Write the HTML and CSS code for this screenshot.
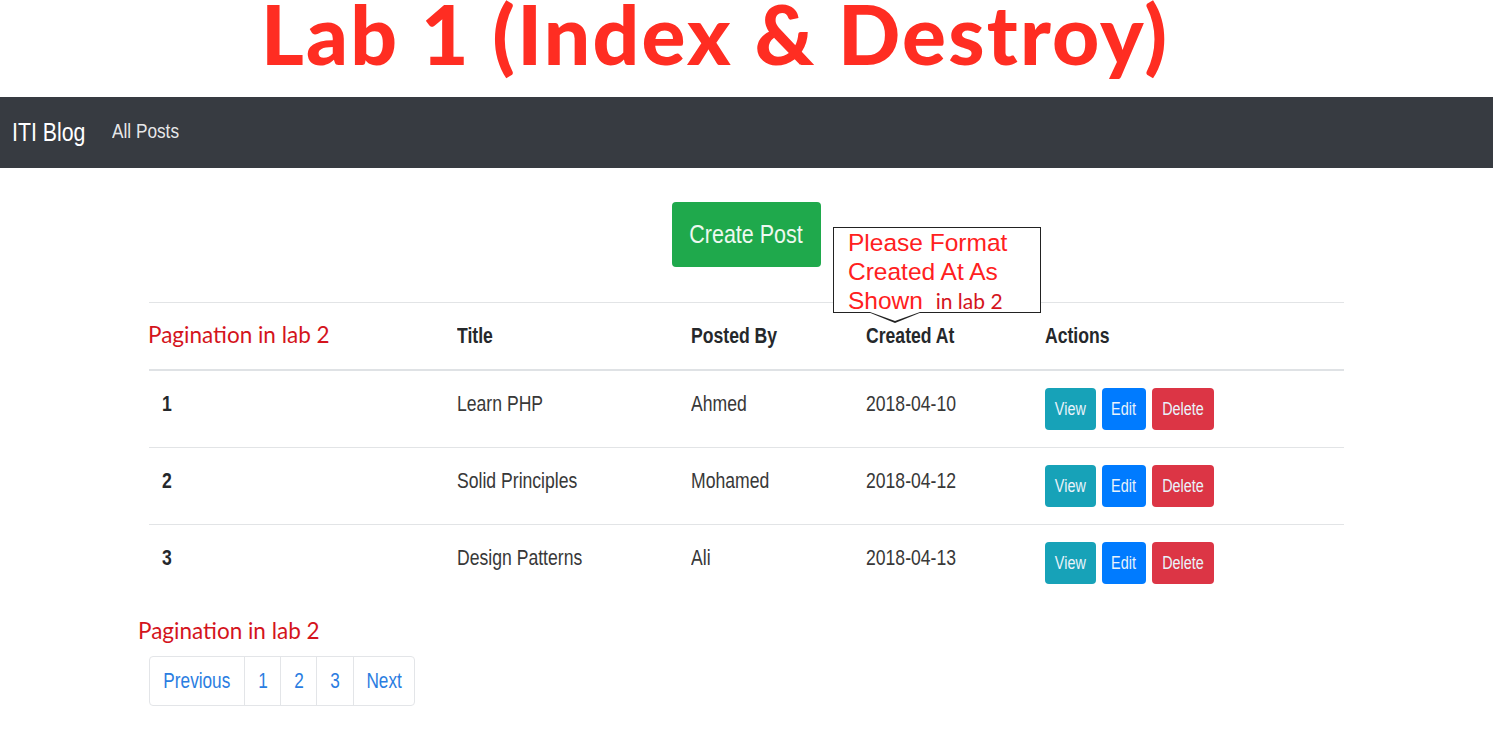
FILE: index.html
```html
<!DOCTYPE html>
<html lang="en">
<head>
<meta charset="utf-8">
<title>Lab 1 (Index &amp; Destroy)</title>
<link rel="stylesheet" href="styles.css">
</head>
<body>
<h1 class="lab-title">Lab 1 (Index &amp; Destroy)</h1>
<nav class="navbar">
  <a class="brand" href="#"><span class="sq">ITI Blog</span></a>
  <a class="nav-link" href="#"><span class="sq">All Posts</span></a>
</nav>
<main class="container">
  <div class="create-row">
    <a class="btn btn-success btn-create" href="#"><span class="sq sq-c">Create Post</span></a>
    <div class="callout">Please Format<br>Created At As<br>Shown <span class="callout-note">in lab 2</span></div>
  </div>
  <table class="posts">
    <colgroup>
      <col class="c-num"><col class="c-title"><col class="c-by"><col class="c-at"><col class="c-act">
    </colgroup>
    <thead>
      <tr>
        <th><span class="note note-head">Pagination in lab 2</span></th>
        <th><span class="sq">Title</span></th>
        <th><span class="sq">Posted By</span></th>
        <th><span class="sq">Created At</span></th>
        <th><span class="sq">Actions</span></th>
      </tr>
    </thead>
    <tbody>
      <tr>
        <td class="num"><span class="sq">1</span></td>
        <td><span class="sq">Learn PHP</span></td>
        <td><span class="sq">Ahmed</span></td>
        <td><span class="sq">2018-04-10</span></td>
        <td class="actions"><a class="btn btn-info btn-view" href="#"><span class="sq sq-c">View</span></a><a class="btn btn-primary btn-edit" href="#"><span class="sq sq-c">Edit</span></a><a class="btn btn-danger btn-delete" href="#"><span class="sq sq-c">Delete</span></a></td>
      </tr>
      <tr>
        <td class="num"><span class="sq">2</span></td>
        <td><span class="sq">Solid Principles</span></td>
        <td><span class="sq">Mohamed</span></td>
        <td><span class="sq">2018-04-12</span></td>
        <td class="actions"><a class="btn btn-info btn-view" href="#"><span class="sq sq-c">View</span></a><a class="btn btn-primary btn-edit" href="#"><span class="sq sq-c">Edit</span></a><a class="btn btn-danger btn-delete" href="#"><span class="sq sq-c">Delete</span></a></td>
      </tr>
      <tr>
        <td class="num"><span class="sq">3</span></td>
        <td><span class="sq">Design Patterns</span></td>
        <td><span class="sq">Ali</span></td>
        <td><span class="sq">2018-04-13</span></td>
        <td class="actions"><a class="btn btn-info btn-view" href="#"><span class="sq sq-c">View</span></a><a class="btn btn-primary btn-edit" href="#"><span class="sq sq-c">Edit</span></a><a class="btn btn-danger btn-delete" href="#"><span class="sq sq-c">Delete</span></a></td>
      </tr>
    </tbody>
  </table>
  <p class="note note-foot">Pagination in lab 2</p>
  <ul class="pagination">
    <li class="pg-prev"><a href="#"><span class="sq sq-c">Previous</span></a></li>
    <li class="pg-num"><a href="#"><span class="sq sq-c">1</span></a></li>
    <li class="pg-num"><a href="#"><span class="sq sq-c">2</span></a></li>
    <li class="pg-num pg-3"><a href="#"><span class="sq sq-c">3</span></a></li>
    <li class="pg-next"><a href="#"><span class="sq sq-c">Next</span></a></li>
  </ul>
</main>
</body>
</html>
```

FILE: styles.css
```css
* { box-sizing: border-box; }

body {
  margin: 0;
  background: #fff;
  font-family: "Liberation Sans", Arial, sans-serif;
  color: #333;
}

a { text-decoration: none; }

/* condensed look of the squeezed screenshot text */
.sq {
  display: inline-block;
  white-space: nowrap;
  transform: scaleX(0.8);
  transform-origin: 0 50%;
}

.sq-c { transform-origin: 50% 50%; }

.lab-title {
  margin: 0;
  height: 97px;
  padding-left: 261px;
  font-family: Lato, "Open Sans", sans-serif;
  font-weight: 900;
  font-size: 82px;
  letter-spacing: 2.2px;
  line-height: 67px;
  color: #ff2d22;
  white-space: nowrap;
}

.navbar {
  height: 71px;
  background: #373b41;
  display: flex;
  align-items: center;
  padding: 0 12px;
  gap: 10px;
}

.brand {
  color: #fff;
  font-size: 26px;
}

.brand .sq { transform: scaleX(0.82); }

.nav-link {
  color: rgba(255,255,255,0.9);
  font-size: 21px;
  padding-bottom: 3px;
}

.nav-link .sq { transform: scaleX(0.82); }

.container {
  width: 1195px;
  margin: 0 auto;
}

.create-row {
  position: relative;
  display: flex;
  justify-content: center;
  padding-top: 34px;
  padding-bottom: 35px;
}

.btn {
  display: inline-block;
  color: #fff;
  border-radius: 4px;
  text-align: center;
  white-space: nowrap;
}

.btn-success { background: #1fa94c; }
.btn-info { background: #17a2b8; }
.btn-primary { background: #007bff; }
.btn-danger { background: #dc3545; }

.btn-create {
  width: 149px;
  height: 65px;
  line-height: 65px;
  font-size: 25px;
  color: #eef8f0;
}

.btn-create .sq { transform: scaleX(0.86); }

.callout {
  position: absolute;
  left: 684px;
  top: 59px;
  width: 208px;
  height: 86px;
  border: 1.5px solid #222;
  background: #fff;
  padding: 0 0 0 14px;
  font-family: "Liberation Sans", Arial, sans-serif;
  font-size: 24.5px;
  line-height: 29px;
  color: #ff2020;
  z-index: 2;
  white-space: nowrap;
}

.callout::before,
.callout::after {
  content: "";
  position: absolute;
  left: 34px;
  border-style: solid;
  border-color: transparent;
}

.callout::before {
  bottom: -11px;
  border-width: 11px 27px 0 27px;
  border-top-color: #222;
}

.callout::after {
  bottom: -8.5px;
  left: 36px;
  border-width: 9px 25px 0 25px;
  border-top-color: #fff;
}

.callout-note {
  font-family: Lato, sans-serif;
  font-size: 21px;
  color: #d4141c;
  margin-left: 6px;
}

.posts {
  width: 100%;
  border-collapse: collapse;
  table-layout: fixed;
}

.c-num { width: 295px; }
.c-title { width: 234px; }
.c-by { width: 175px; }
.c-at { width: 179px; }
.c-act { width: 312px; }

.posts th,
.posts td {
  text-align: left;
  vertical-align: top;
  padding: 19px 14px 19px 13px;
  font-size: 22px;
  line-height: 28px;
}

.posts th {
  color: #25282b;
  font-weight: bold;
  border-top: 1px solid #e2e4e6;
  border-bottom: 2px solid #dfe2e5;
}

.posts td {
  border-top: 1px solid #e2e4e6;
  padding-bottom: 29px;
  color: #383838;
}

.posts tbody tr:first-child td { border-top: none; }

.posts td.num { font-weight: bold; color: #25282b; padding-left: 13px; }

.posts td.actions {
  padding-top: 17px;
  padding-bottom: 17px;
  padding-left: 13px;
}

.actions .btn {
  height: 42px;
  line-height: 42px;
  font-size: 18px;
  margin-right: 6px;
  color: #e9f3fb;
}

.btn-view { width: 51px; }
.btn-edit { width: 44px; }
.btn-delete { width: 62px; }

.note {
  font-family: Lato, sans-serif;
  color: #d4141c;
  font-weight: normal;
  font-size: 22.5px;
  white-space: nowrap;
}

.note-head {
  display: inline-block;
  margin-left: -14px;
  margin-top: -5px;
}

.note-foot {
  margin: 16px 0 0 -11px;
  line-height: 28px;
}

.pagination {
  list-style: none;
  margin: 11px 0 0 0;
  padding: 0;
  display: inline-flex;
  border: 1px solid #e3e5e8;
  border-radius: 4px;
}

.pagination li + li { border-left: 1px solid #e3e5e8; }

.pg-prev { width: 94px; }
.pg-num { width: 36px; }
.pg-3 { width: 37px; }
.pg-next { width: 61px; }

.pagination a {
  display: block;
  height: 48px;
  line-height: 48px;
  text-align: center;
  font-size: 21.5px;
  color: #2a7de1;
  white-space: nowrap;
}
```
